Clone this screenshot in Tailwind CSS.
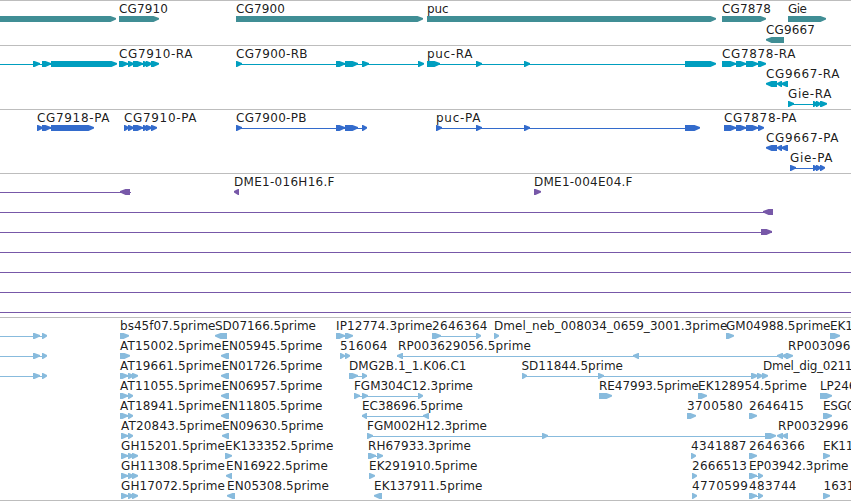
<!DOCTYPE html>
<html lang="en">
<head>
<meta charset="utf-8">
<title>Genome tracks</title>
<script src="https://cdn.jsdelivr.net/npm/@tailwindcss/browser@4"></script>
</head>
<body class="bg-white overflow-hidden">
<main class="flex flex-col w-[851px] h-[501px] overflow-hidden border-b border-[#bdbdbd] font-['DejaVu_Sans',sans-serif] text-[12px] text-black">
  <section class="h-[45px] shrink-0 border-t border-[#bdbdbd] text-[#408e95]" data-track="gene"></section>
  <section class="h-[64px] shrink-0 border-t border-[#bdbdbd] text-[#009ebf]" data-track="mrna"></section>
  <section class="h-[64px] shrink-0 border-t border-[#bdbdbd] text-[#336bcc]" data-track="cds"></section>
  <section class="h-[144px] shrink-0 border-t border-[#bdbdbd] text-[#7758a8]" data-track="bac"></section>
  <section class="h-[183px] shrink-0 border-t border-[#bdbdbd] text-[#88bbdd]" data-track="est"></section>
</main>
<script>
// Row: l = labels [text, x, inkEnd], c = connector lines [x0, x1],
// r / b = forward / reverse features [x0, x1]
const tracks = {
  gene: {pitch: 21, rows: [
    {l: [['CG7910',119,167.5],['CG7900',236,284.5],['puc',427,448],['CG7878',722,770.5],['Gie',788,806.5]],
     r: [[-5,116],[119,159],[236,423],[427,716],[722,766],[788,826]]},
    {l: [['CG9667',766,814.5]], b: [[766,784]]}
  ]},
  mrna: {pitch: 20, rows: [
    {l: [['CG7910-RA',119,192],['CG7900-RB',236,307],['puc-RA',427,472],['CG7878-RA',722,795]],
     c: [[0,116],[119,158],[236,423],[427,715],[722,765]],
     r: [[33,40],[42,51],[51,117],[119,128],[128,134],[133,143],[143,149],[146,152],[151,159],[236,242],[336,345],[345,358],[362,369],[418,424],[427,440],[476,482],[524,530],[685,716],[722,736],[736,746],[746,758],[758,766]]},
    {l: [['CG9667-RA',766,839]], b: [[766,777],[777,782],[781,788]]},
    {l: [['Gie-RA',788,831]], c: [[788,826]], r: [[788,794],[813,818],[816,821],[820,827]]}
  ]},
  cds: {pitch: 20, rows: [
    {l: [['CG7918-PA',37,109],['CG7910-PA',124,196],['CG7900-PB',236,306],['puc-PA',436,480],['CG7878-PA',724,796]],
     c: [[37,93],[124,156],[236,366],[436,699],[724,763]],
     r: [[37,43],[42,51],[51,94],[124,129],[128,134],[133,143],[143,149],[146,152],[151,157],[236,242],[336,345],[345,358],[362,367],[436,442],[476,482],[524,530],[685,700],[724,736],[736,746],[746,758],[758,764]]},
    {l: [['CG9667-PA',766,838]], b: [[766,777],[777,782],[781,788]]},
    {l: [['Gie-PA',790,832]], c: [[790,824]], r: [[790,796],[813,818],[816,821],[820,825]]}
  ]},
  bac: {pitch: 20, rows: [
    {l: [['DME1-016H16.F',234,334],['DME1-004E04.F',534,632]], c: [[0,131]], b: [[120,130],[234,239]], r: [[534,541]]},
    {c: [[0,773]], b: [[763,773]]},
    {c: [[0,772]], r: [[761,772]]},
    {c: [[0,851]]}, {c: [[0,851]]}, {c: [[0,851]]}, {c: [[0,851]]}
  ]},
  est: {pitch: 20, rows: [
    {l: [['bs45f07.5prime',120,215],['SD07166.5prime',215,315.5],['IP12774.3prime',336,432],['2646364',432,487],['Dmel_neb_008034_0659_3001.3prime',494,727],['GM04988.5prime',726,830],['EK1',830,852.5]],
     c: [[0,46],[336,352],[432,480]],
     r: [[33,40],[42,47],[120,129],[336,345],[345,353],[432,441],[476,481],[494,499],[726,734],[830,840]], b: [[215,227]]},
    {l: [['AT15002.5prime',120,221],['EN05945.5prime',221.5,322],['516064',340,387],['RP003629056.5prime',398,530.5],['RP003096',788,850]],
     c: [[0,46],[340,349],[397,792]],
     r: [[33,40],[42,47],[120,130],[340,345],[345,350],[786,793]], b: [[221,229],[397,403],[633,639],[777,783],[782,788]]},
    {l: [['AT19661.5prime',120,221],['EN01726.5prime',221.5,322],['DMG2B.1_1.K06.C1',349,466],['SD11844.5prime',521.5,622.5],['Dmel_dig_0211',763,852]],
     c: [[0,46],[120,137],[349,367],[522,767]],
     r: [[33,40],[42,47],[120,128],[128,134],[132,138],[349,358],[362,367],[522,527],[598,604],[751,758],[757,763],[762,768]], b: [[221,229]]},
    {l: [['AT11055.5prime',120,221],['EN06957.5prime',221.5,322],['FGM304C12.3prime',354,472.5],['RE47993.5prime',599,698.5],['EK128954.5prime',698,806.5],['LP246',820,856]],
     c: [[120,132],[354,422]],
     r: [[120,128],[128,133],[354,360],[362,368],[418,423],[599,612],[698,707],[820,832]], b: [[221,229]]},
    {l: [['AT18941.5prime',120,221],['EN11805.5prime',221.5,322],['EC38696.5prime',362,462.5],['3700580',687,742.5],['2646415',749,803.5],['ESG0',823,854]],
     c: [[120,132],[362,428]],
     r: [[120,128],[128,133],[687,696],[749,757],[823,832]], b: [[221,229],[362,367],[423,429]]},
    {l: [['AT20843.5prime',121,222],['EN09630.5prime',222,323],['FGM002H12.3prime',367,486.5],['RP0032996',778,848]],
     c: [[121,132],[367,775]],
     r: [[121,128],[128,133],[367,373],[542,548],[765,776]], b: [[222,229],[777,783],[782,788]]},
    {l: [['GH15201.5prime',121,224.5],['EK133352.5prime',225,333],['RH67933.3prime',368,470.5],['4341887',691,746],['2646366',749,804.5],['EK11',823,853]],
     c: [[121,137],[368,382]],
     r: [[121,128],[128,134],[132,138],[225,232],[368,376],[377,383],[691,696],[749,757],[823,830]]},
    {l: [['GH11308.5prime',121,224.5],['EN16922.5prime',226,327.5],['EK291910.5prime',369,477],['2666513',692,746.5],['EP03942.3prime',749,848]],
     c: [[121,137],[749,762]],
     r: [[121,128],[128,134],[132,138],[369,375],[692,697],[749,757],[758,763]], b: [[226,232]]},
    {l: [['GH17072.5prime',121,224.5],['EN05308.5prime',227,328.5],['EK137911.5prime',374,482],['4770599',692,747.5],['483744',749,796],['1631',823.5,854]],
     c: [[121,137],[749,762]],
     r: [[121,128],[128,134],[132,138],[692,697],[749,757],[758,763],[823,830]], b: [[227,235],[374,382]]}
  ]}
};

for (const [name, track] of Object.entries(tracks)) {
  const el = document.querySelector(`[data-track="${name}"]`);
  let s = '';
  track.rows.forEach((row, i) => {
    const y = 15 + i * track.pitch;
    for (const [a, z] of row.c || []) s += `<rect x="${a}" y="${y + 3}" width="${z - a}" height="1" shape-rendering="crispEdges"/>`;
    for (const [a, z] of row.r || []) {
      const n = Math.max(a + 1, z - 5.5);
      s += `<path d="M${a} ${y}H${n}L${z} ${y + 2}V${y + 3.4}L${n} ${y + 6}H${a}Z"/>`;
    }
    for (const [a, z] of row.b || []) {
      const n = Math.min(z - 1, a + 5.5);
      s += `<path d="M${z} ${y}H${n}L${a} ${y + 2}V${y + 3.4}L${n} ${y + 6}H${z}Z"/>`;
    }
    for (const [t, a, z] of row.l || []) s += `<text x="${a}" y="${y - 3}" textLength="${z - a + 0.5}" class="fill-black/90">${t}</text>`;
  });
  el.innerHTML = `<svg class="block w-full h-full overflow-hidden fill-current">${s}</svg>`;
}
</script>
</body>
</html>
